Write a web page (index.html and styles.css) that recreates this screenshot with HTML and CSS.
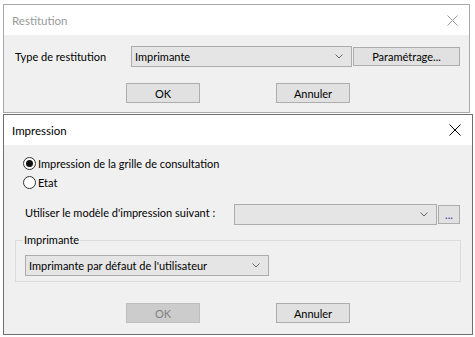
FILE: index.html
```html
<!DOCTYPE html>
<html lang="fr">
<head>
  <meta charset="UTF-8">
  <title>Restitution</title>
  <link rel="stylesheet" href="styles.css">
</head>
<body>
  <!-- Restitution (inactive) -->
  <div class="window win-restitution">
    <div class="titlebar">
      <span class="title">Restitution</span>
      <svg class="close" width="11" height="11" viewBox="0 0 11 11"><path d="M0.5 0.5 L10.5 10.5 M10.5 0.5 L0.5 10.5" stroke="currentColor" stroke-width="1"/></svg>
    </div>
    <div class="content">
      <div class="row type-row">
        <label class="lbl type-lbl">Type de restitution</label>
        <div class="combo type-combo">
          <span>Imprimante</span>
          <svg class="chev" width="8" height="5" viewBox="0 0 8 5"><path d="M0.5 0.5 L4 4 L7.5 0.5" fill="none" stroke="#666" stroke-width="1"/></svg>
        </div>
        <button class="btn param-btn">Paramétrage...</button>
      </div>
      <div class="row actions">
        <button class="btn">OK</button>
        <button class="btn">Annuler</button>
      </div>
    </div>
  </div>

  <!-- Impression (active) -->
  <div class="window win-impression">
    <div class="titlebar">
      <span class="title">Impression</span>
      <svg class="close" width="12" height="12" viewBox="0 0 12 12"><path d="M0.5 0.5 L11.5 11.5 M11.5 0.5 L0.5 11.5" stroke="currentColor" stroke-width="1"/></svg>
    </div>
    <div class="content">
      <div class="radios">
        <div class="radio-row"><span class="radio checked"></span>Impression de la grille de consultation</div>
        <div class="radio-row"><span class="radio"></span>Etat</div>
      </div>
      <div class="row model-row">
        <label class="lbl model-lbl">Utiliser le modèle d'impression suivant :</label>
        <div class="combo model-combo">
          <span></span>
          <svg class="chev" width="8" height="5" viewBox="0 0 8 5"><path d="M0.5 0.5 L4 4 L7.5 0.5" fill="none" stroke="#666" stroke-width="1"/></svg>
        </div>
        <button class="btn dots-btn">...</button>
      </div>
      <fieldset class="group">
        <legend>Imprimante</legend>
        <div class="combo printer-combo">
          <span>Imprimante par défaut de l'utilisateur</span>
          <svg class="chev" width="8" height="5" viewBox="0 0 8 5"><path d="M0.5 0.5 L4 4 L7.5 0.5" fill="none" stroke="#666" stroke-width="1"/></svg>
        </div>
      </fieldset>
      <div class="row actions">
        <button class="btn" disabled>OK</button>
        <button class="btn">Annuler</button>
      </div>
    </div>
  </div>
</body>
</html>
```

FILE: styles.css
```css
body {
  margin: 0;
  background: #fff;
  font-family: Lato, 'Noto Sans', sans-serif;
  font-size: 11px;
  color: #000;
}

.window {
  margin-left: 3px;
  border: 1px solid #999;
  background: #f0f0f0;
  display: flex;
  flex-direction: column;
}

.win-restitution {
  margin-top: 4px;
  width: 465px;
  height: 107px;
  border-color: #a8a8a8;
}

.win-impression {
  margin-top: 1px;
  width: 468px;
  height: 219px;
  border-color: #6f6f6f;
}

.titlebar {
  height: 30px;
  background: #fff;
  display: flex;
  align-items: center;
  justify-content: space-between;
  padding: 0 11px 0 8px;
  font-size: 11.5px;
}

.win-restitution .titlebar {
  color: #999;
}

.win-restitution .close {
  color: #999;
}

.win-impression .close {
  color: #000;
}

.content {
  flex: 1;
  display: flex;
  flex-direction: column;
}

.row {
  display: flex;
  align-items: center;
}

.lbl {
  flex: none;
  white-space: nowrap;
}

.combo {
  box-sizing: border-box;
  height: 21px;
  background: #e5e5e5;
  border: 1px solid #acacac;
  display: flex;
  align-items: center;
  justify-content: space-between;
  padding: 0 8px 0 3px;
}

.btn {
  box-sizing: border-box;
  font: inherit;
  color: #000;
  background: #e1e1e1;
  border: 1px solid #adadad;
  height: 20px;
  width: 74px;
  padding: 0;
  margin: 0;
}

.btn:disabled {
  background: #cccccc;
  border-color: #bfbfbf;
  color: #838383;
}

/* Restitution */
.type-row {
  margin-top: 11px;
  padding-left: 11px;
}

.type-lbl {
  width: 116px;
}

.type-combo {
  width: 221px;
}

.param-btn {
  width: 107px;
  height: 19px;
  margin-left: 1px;
}

.actions {
  padding-left: 122px;
  gap: 76px;
}

.win-restitution .actions {
  margin-top: 16px;
}

/* Impression */
.radios {
  padding: 9px 0 0 19px;
}

.radio-row {
  height: 19px;
  display: flex;
  align-items: center;
}

.radio {
  box-sizing: border-box;
  width: 13px;
  height: 13px;
  border: 1px solid #333;
  border-radius: 50%;
  background: #fff;
  margin-right: 2px;
  display: flex;
  align-items: center;
  justify-content: center;
}

.radio.checked::after {
  content: "";
  width: 7px;
  height: 7px;
  border-radius: 50%;
  background: #111;
}

.model-row {
  margin-top: 12px;
  padding-left: 21px;
}

.model-lbl {
  width: 209px;
  margin-top: -4px;
}

.model-combo {
  width: 203px;
}

.dots-btn {
  width: 22px;
  height: 19px;
  margin-left: 1px;
  color: #35309a;
  line-height: 12px;
}

.group {
  margin: 7px 11px 0;
  padding: 7px 9px 5px;
  border: 1px solid #dcdcdc;
}

.group legend {
  padding: 0 1px;
  margin-left: -2px;
  line-height: 16px;
}

.printer-combo {
  width: 244px;
}

.win-impression .actions {
  margin-top: 21px;
}
```
